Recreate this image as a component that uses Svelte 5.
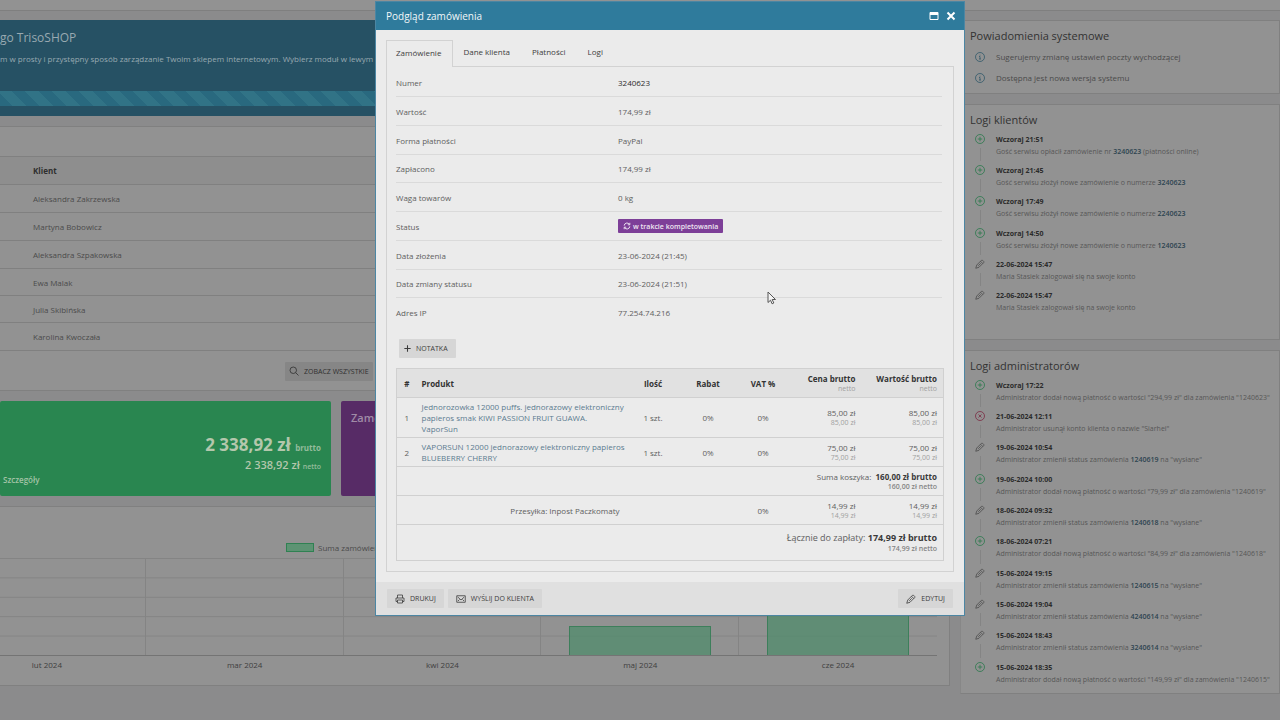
<script lang="ts">
	const customers = [
		'Aleksandra Zakrzewska',
		'Martyna Bobowicz',
		'Aleksandra Szpakowska',
		'Ewa Malak',
		'Julia Skibińska',
		'Karolina Kwoczała'
	];

	const notices = ['Sugerujemy zmianę ustawień poczty wychodzącej', 'Dostępna jest nowa wersja systemu'];

	const customerLogs = [
		{ icon: 'plus', date: 'Wczoraj 21:51', before: 'Gość serwisu opłacił zamówienie nr', order: '3240623', after: '(płatności online)' },
		{ icon: 'plus', date: 'Wczoraj 21:45', before: 'Gość serwisu złożył nowe zamówienie o numerze', order: '3240623', after: '' },
		{ icon: 'plus', date: 'Wczoraj 17:49', before: 'Gość serwisu złożył nowe zamówienie o numerze', order: '2240623', after: '' },
		{ icon: 'plus', date: 'Wczoraj 14:50', before: 'Gość serwisu złożył nowe zamówienie o numerze', order: '1240623', after: '' },
		{ icon: 'pencil', date: '22-06-2024 15:47', before: 'Maria Stasiek zalogował się na swoje konto', order: '', after: '' },
		{ icon: 'pencil', date: '22-06-2024 15:47', before: 'Maria Stasiek zalogował się na swoje konto', order: '', after: '' }
	];

	const adminLogs = [
		{ icon: 'plus', date: 'Wczoraj 17:22', before: 'Administrator dodał nową płatność o wartości "294,99 zł" dla zamówienia "1240623"', order: '', after: '' },
		{ icon: 'remove', date: '21-06-2024 12:11', before: 'Administrator usunął konto klienta o nazwie "Siarhei"', order: '', after: '' },
		{ icon: 'pencil', date: '19-06-2024 10:54', before: 'Administrator zmienił status zamówienia', order: '1240619', after: 'na "wysłane"' },
		{ icon: 'plus', date: '19-06-2024 10:00', before: 'Administrator dodał nową płatność o wartości "79,99 zł" dla zamówienia "1240619"', order: '', after: '' },
		{ icon: 'pencil', date: '18-06-2024 09:32', before: 'Administrator zmienił status zamówienia', order: '1240618', after: 'na "wysłane"' },
		{ icon: 'plus', date: '18-06-2024 07:21', before: 'Administrator dodał nową płatność o wartości "84,99 zł" dla zamówienia "1240618"', order: '', after: '' },
		{ icon: 'pencil', date: '15-06-2024 19:15', before: 'Administrator zmienił status zamówienia', order: '1240615', after: 'na "wysłane"' },
		{ icon: 'pencil', date: '15-06-2024 19:04', before: 'Administrator zmienił status zamówienia', order: '4240614', after: 'na "wysłane"' },
		{ icon: 'pencil', date: '15-06-2024 18:43', before: 'Administrator zmienił status zamówienia', order: '3240614', after: 'na "wysłane"' },
		{ icon: 'plus', date: '15-06-2024 18:35', before: 'Administrator dodał nową płatność o wartości "149,99 zł" dla zamówienia "1240615"', order: '', after: '' }
	];

	// bar height as a percent of the plot
	const months = [
		{ label: 'lut 2024', value: 0 },
		{ label: 'mar 2024', value: 0 },
		{ label: 'kwi 2024', value: 0 },
		{ label: 'maj 2024', value: 29 },
		{ label: 'cze 2024', value: 88 }
	];

	const tabs = ['Zamówienie', 'Dane klienta', 'Płatności', 'Logi'];
	let activeTab = 'Zamówienie';

	const details = [
		{ label: 'Numer', value: '3240623' },
		{ label: 'Wartość', value: '174,99 zł' },
		{ label: 'Forma płatności', value: 'PayPal' },
		{ label: 'Zapłacono', value: '174,99 zł' },
		{ label: 'Waga towarów', value: '0 kg' },
		{ label: 'Status', value: 'w trakcie kompletowania' },
		{ label: 'Data złożenia', value: '23-06-2024 (21:45)' },
		{ label: 'Data zmiany statusu', value: '23-06-2024 (21:51)' },
		{ label: 'Adres IP', value: '77.254.74.216' }
	];

	const products = [
		{ name: 'Jednorozowka 12000 puffs. jednorazowy elektroniczny\npapieros smak KIWI PASSION FRUIT GUAWA.\nVaporSun', price: '85,00 zł' },
		{ name: 'VAPORSUN 12000 jednorazowy elektroniczny papieros\nBLUEBERRY CHERRY', price: '75,00 zł' }
	];
</script>

{#snippet pencil()}
	<svg class="icon" viewBox="0 0 20 20" aria-hidden="true">
		<path d="M1.500 18.500l2-6.500L13 2.500a1.500 1.500 0 0 1 2 0L17.500 5a1.500 1.500 0 0 1 0 2L8 16.500zM11 4.500L15.500 9M6.500 13.500l5-5" />
	</svg>
{/snippet}

{#snippet timeline(logs: any[])}
	<ul class="timeline">
		{#each logs as log}
			<li>
				<span class="mark {log.icon}">
					{#if log.icon === 'pencil'}
						{@render pencil()}
					{:else}
						<svg class="icon" viewBox="0 0 20 20" aria-hidden="true">
							<circle cx="10" cy="10" r="9" />
							<path d={log.icon === 'plus' ? 'M10 5.500v9M5.500 10h9' : 'M7 7l6 6M13 7l-6 6'} />
						</svg>
					{/if}
				</span>
				<div>
					<strong>{log.date}</strong>
					<p>{log.before} {#if log.order}<a href="#order">{log.order}</a>{/if} {log.after}</p>
				</div>
			</li>
		{/each}
	</ul>
{/snippet}

<div class="page">
	<div class="topbar"></div>

	<div class="columns">
		<main>
			<section class="banner">
				<h1>go TrisoSHOP</h1>
				<p>m w prosty i przystępny sposób zarządzanie Twoim sklepem internetowym. Wybierz moduł w lewym p</p>
				<div class="progress"></div>
			</section>

			<section class="panel orders">
				<table>
					<thead>
						<tr><th>Klient</th></tr>
					</thead>
					<tbody>
						{#each customers as customer}
							<tr><td>{customer}</td></tr>
						{/each}
					</tbody>
				</table>
				<div class="orders-footer">
					<button class="btn dim">
						<svg class="icon" viewBox="0 0 20 20" aria-hidden="true"><circle cx="8.500" cy="8.500" r="6.500" /><path d="M13.500 13.500L19 19" /></svg>
						Zobacz wszystkie
					</button>
				</div>
			</section>

			<div class="cards">
				<section class="card green">
					<div class="sum">2 338,92 zł <small>brutto</small></div>
					<div class="sum-net">2 338,92 zł <small>netto</small></div>
					<a href="#details">Szczegóły</a>
				</section>
				<section class="card purple">
					<h2>Zamó</h2>
				</section>
			</div>

			<section class="panel chart">
				<div class="legend"><span class="swatch"></span>Suma zamówień</div>
				<div class="plot">
					{#each months as month}
						<div class="month">
							{#if month.value}
								<div class="bar" style="height: {month.value}%"></div>
							{/if}
						</div>
					{/each}
				</div>
				<div class="axis">
					{#each months as month}
						<span>{month.label}</span>
					{/each}
				</div>
			</section>
		</main>

		<aside>
			<section class="panel notices">
				<h2>Powiadomienia systemowe</h2>
				<ul>
					{#each notices as notice}
						<li>
							<svg class="icon" viewBox="0 0 20 20" aria-hidden="true"><circle cx="10" cy="10" r="9" /><path d="M8 9h2v5M8 14h4M10 5.500v1.500" /></svg>
							{notice}
						</li>
					{/each}
				</ul>
			</section>
			<section class="panel customer-logs">
				<h2>Logi klientów</h2>
				{@render timeline(customerLogs)}
			</section>
			<section class="panel">
				<h2>Logi administratorów</h2>
				{@render timeline(adminLogs)}
			</section>
		</aside>
	</div>
</div>

<div class="overlay">
	<div class="modal" role="dialog" aria-labelledby="modal-title">
		<header>
			<h2 id="modal-title">Podgląd zamówienia</h2>
			<button aria-label="Maksymalizuj">
				<svg viewBox="0 0 10 10" aria-hidden="true"><path d="M1 1.500h8v7H1z" fill="none" stroke="#fff" /><path d="M1 1.500h8v2.500H1z" fill="#fff" /></svg>
			</button>
			<button aria-label="Zamknij">
				<svg viewBox="0 0 10 10" aria-hidden="true"><path d="M1.500 1.500l7 7M8.500 1.500l-7 7" stroke="#fff" stroke-width="2" /></svg>
			</button>
		</header>

		<div class="modal-body">
			<div class="tabs" role="tablist">
				{#each tabs as tab}
					<button role="tab" aria-selected={activeTab === tab} class:active={activeTab === tab} on:click={() => (activeTab = tab)}>{tab}</button>
				{/each}
			</div>

			<div class="tab-panel">
				<dl>
					{#each details as row}
						<div>
							<dt>{row.label}</dt>
							<dd class:strong={row.label === 'Numer'}>
								{#if row.label === 'Status'}
									<span class="badge">
										<svg class="icon" viewBox="0 0 20 20" aria-hidden="true"><path d="M3 9a7 7 0 0 1 13-3M17 2v5h-5M17 11a7 7 0 0 1-13 3M3 18v-5h5" /></svg>
										{row.value}
									</span>
								{:else}
									{row.value}
								{/if}
							</dd>
						</div>
					{/each}
				</dl>

				<button class="btn note">
					<svg class="icon" viewBox="0 0 20 20" aria-hidden="true"><path d="M10 1v18M1 10h18" /></svg>
					Notatka
				</button>

				<table class="products">
					<colgroup>
						<col class="c-no" /><col class="c-name" /><col class="c-mid" /><col class="c-mid" /><col class="c-mid" /><col class="c-price" /><col class="c-value" />
					</colgroup>
					<thead>
						<tr>
							<th>#</th>
							<th class="left">Produkt</th>
							<th>Ilość</th>
							<th>Rabat</th>
							<th>VAT %</th>
							<th class="right">Cena brutto<small>netto</small></th>
							<th class="right">Wartość brutto<small>netto</small></th>
						</tr>
					</thead>
					<tbody>
						{#each products as product, i}
							<tr>
								<td>{i + 1}</td>
								<td class="left"><a href="#product">{product.name}</a></td>
								<td>1 szt.</td>
								<td>0%</td>
								<td>0%</td>
								<td class="right">{product.price}<small>{product.price}</small></td>
								<td class="right">{product.price}<small>{product.price}</small></td>
							</tr>
						{/each}
						<tr>
							<td class="right" colspan="7">Suma koszyka: &nbsp;<b>160,00 zł brutto</b><small><b>160,00 zł netto</b></small></td>
						</tr>
						<tr>
							<td class="right" colspan="2">Przesyłka: Inpost Paczkomaty</td>
							<td></td>
							<td></td>
							<td>0%</td>
							<td class="right">14,99 zł<small>14,99 zł</small></td>
							<td class="right">14,99 zł<small>14,99 zł</small></td>
						</tr>
						<tr class="total">
							<td class="right" colspan="7">Łącznie do zapłaty: <b>174,99 zł brutto</b><small><b>174,99 zł netto</b></small></td>
						</tr>
					</tbody>
				</table>
			</div>
		</div>

		<footer>
			<button class="btn">
				<svg class="icon" viewBox="0 0 20 20" aria-hidden="true"><path d="M5 8V2h10v6M5 15H2V8h16v7h-3M5 12h10v6H5z" /></svg>
				Drukuj
			</button>
			<button class="btn">
				<svg class="icon" viewBox="0 0 20 20" aria-hidden="true"><path d="M1.500 3.500h17v13h-17zM3.500 6l6.500 6 6.500-6M4 14l3-3M16 14l-3-3" /></svg>
				Wyślij do klienta
			</button>
			<button class="btn edit">
				{@render pencil()}
				Edytuj
			</button>
		</footer>
	</div>

	<svg class="cursor" viewBox="0 0 10 14" aria-hidden="true"><path d="M1 1v10.500l2.500-2.300 1.600 3.600 1.700-.8-1.600-3.500H8.500z" /></svg>
</div>

<style>
	:global(body) {
		background: #8b8b8c;
		font-family: 'Open Sans', 'Noto Sans', sans-serif;
		font-size: 8px;
		line-height: 11px;
		overflow: hidden;
	}

	h1, h2, p, ul, dl, dd {
		margin: 0;
		padding: 0;
		font-weight: 400;
	}

	ul {
		list-style: none;
	}

	a {
		text-decoration: none;
	}

	button {
		font-family: inherit;
		border: none;
		padding: 0;
		cursor: pointer;
	}

	.icon {
		flex: none;
		width: 10px;
		height: 10px;
		fill: none;
		stroke: currentColor;
		stroke-width: 1.6;
	}

	.page {
		color: #4b4b4b;
	}

	.topbar {
		height: 10px;
		background: #929292;
		border-bottom: 1px solid #7f7f7f;
		margin-bottom: 9px;
	}

	.columns {
		display: grid;
		grid-template-columns: minmax(0, 1fr) 320px;
		gap: 10px;
		align-items: start;
	}

	main, aside {
		display: flex;
		flex-direction: column;
		gap: 10px;
		min-width: 0;
	}

	.panel {
		box-sizing: border-box;
		background: #929292;
		border: 1px solid #808080;
		border-left-color: #878787;
	}

	main .panel {
		border-left: none;
	}

	.banner {
		box-sizing: border-box;
		height: 96px;
		padding: 9px 0 10px;
		background: #265164;
		color: #98a9b1;
		overflow: hidden;
	}

	.banner h1 {
		font-size: 12px;
		line-height: 18px;
	}

	.banner p {
		padding-top: 6px;
		line-height: 11px;
		white-space: nowrap;
	}

	.progress {
		height: 15px;
		margin-top: 27px;
		background: repeating-linear-gradient(45deg, #29697f 0 9px, #317386 9px 19px);
	}

	.orders {
		padding-top: 29px;
	}

	.orders table {
		width: 100%;
		border-collapse: collapse;
	}

	.orders th, .orders td {
		box-sizing: border-box;
		height: 28px;
		padding: 0 33px;
		text-align: left;
		border-top: 1px solid #808080;
	}

	.orders th {
		color: #2f2f2f;
		background: #8e8e8e;
	}

	.orders tbody tr:nth-last-child(-n + 3) td {
		height: 27px;
	}

	.orders-footer {
		padding: 11px 0 9px 285px;
		border-top: 1px solid #808080;
	}

	.btn {
		display: inline-flex;
		align-items: center;
		gap: 5px;
		height: 19px;
		padding: 0 8px;
		background: #d6d6d6;
		color: #3c3c3c;
		font-size: 7px;
		line-height: 11px;
		text-transform: uppercase;
		border-radius: 1px;
	}

	.btn.dim {
		background: #868686;
		color: #303030;
		padding: 0 4px;
	}

	.cards {
		display: grid;
		grid-template-columns: 331px 1fr;
		gap: 10px;
	}

	.card {
		box-sizing: border-box;
		height: 95px;
		border-radius: 2px;
		padding: 9px 10px;
		font-weight: 600;
		color: #b4c7ac;
	}

	.green {
		display: flex;
		flex-direction: column;
		align-items: flex-end;
		padding-top: 33px;
		background: #298650;
	}

	.green a {
		align-self: flex-start;
		margin: 0 -7px;
		font-weight: 600;
		color: #a3c3a6;
	}

	.purple {
		background: #572b66;
		color: #a08ba7;
	}

	.purple h2 {
		font-size: 11px;
		line-height: 15px;
		font-weight: 600;
	}

	.sum {
		font-size: 17px;
		line-height: 21px;
		font-weight: 700;
	}

	.sum-net {
		font-size: 11px;
		line-height: 14px;
	}

	.sum small, .sum-net small {
		font-size: 7px;
		color: #94bc9c;
	}

	.sum small {
		font-size: 8px;
	}

	.chart {
		padding: 35px 12px 15px 0;
		overflow: hidden;
	}

	.legend {
		display: flex;
		align-items: center;
		gap: 4px;
		padding-left: 286px;
	}

	.swatch {
		box-sizing: border-box;
		width: 28px;
		height: 9px;
		background: #5d9373;
		border: 1px solid #2f8152;
	}

	.plot, .axis {
		display: grid;
		grid-template-columns: repeat(5, 1fr);
		margin-left: -52px;
	}

	.plot {
		height: 97px;
		margin-top: 5px;
		border-bottom: 1px solid #747474;
		background: linear-gradient(#848484 1px, transparent 1px) 0 0 / 100% 20%;
	}

	.month {
		display: flex;
		align-items: flex-end;
		justify-content: center;
		border-right: 1px solid #848484;
	}

	.month:last-child {
		border: none;
	}

	.bar {
		box-sizing: border-box;
		width: 72%;
		background: rgba(75, 140, 105, 0.7);
		border: 1px solid #3d7f5b;
		border-bottom: none;
	}

	.axis {
		padding-top: 3px;
		text-align: center;
		line-height: 11px;
		color: #404040;
	}

	aside .panel {
		padding: 6px 0 7px 9px;
		white-space: nowrap;
		overflow: hidden;
	}

	aside h2 {
		font-size: 11px;
		line-height: 17px;
		color: #333;
	}

	.notices ul {
		padding: 2px 5px 0;
	}

	.notices li {
		display: flex;
		align-items: center;
		gap: 11px;
		height: 21px;
	}

	.notices .icon {
		color: #31596b;
	}

	aside .panel.notices {
		padding-bottom: 5px;
	}

	aside .customer-logs {
		padding-bottom: 25px;
	}

	.timeline {
		padding: 6px 5px 0;
	}

	.timeline li {
		display: flex;
		gap: 11px;
		height: 31px;
		font-size: 7px;
		line-height: 12px;
		color: #575757;
	}

	.timeline li:nth-child(3n) {
		height: 32px;
	}

	.timeline li:last-child {
		height: 24px;
	}

	.mark {
		display: flex;
		flex-direction: column;
		align-items: center;
		color: #4b4b4b;
	}

	.mark.plus {
		color: #2b7a4c;
	}

	.mark.remove {
		color: #7c2b43;
	}

	.timeline li:not(:last-child) .mark::after {
		content: '';
		flex: 1;
		width: 1px;
		margin: 4px 0;
		background: #848484;
	}

	.timeline strong {
		display: block;
		color: #2b2b2b;
	}

	.timeline a {
		color: #2d4450;
		font-weight: 600;
	}

	.overlay {
		position: absolute;
		inset: 0;
		display: flex;
		justify-content: center;
		align-items: flex-start;
		padding: 1px 0 0 60px;
	}

	.modal {
		box-sizing: border-box;
		width: 590px;
		background: #ebebeb;
		border: 1px solid #4c86a3;
		color: #606060;
	}

	.modal header {
		display: flex;
		align-items: center;
		gap: 7px;
		height: 28px;
		padding: 0 8px 0 10px;
		background: #2f7b9c;
	}

	.modal header h2 {
		flex: 1;
		font-size: 10px;
		line-height: 16px;
		color: #f2f7f9;
	}

	.modal header button {
		display: flex;
		background: none;
	}

	.modal header svg {
		width: 10px;
		height: 10px;
	}

	.modal-body {
		padding: 10px;
	}

	.tabs {
		display: flex;
	}

	.tabs button {
		box-sizing: border-box;
		height: 26px;
		padding: 0 11px 4px 9px;
		font-size: 8px;
		color: #404040;
		background: none;
		border: 1px solid transparent;
		border-bottom: none;
	}

	.tabs .active {
		position: relative;
		z-index: 1;
		height: 27px;
		margin-bottom: -1px;
		border-color: #d2d2d2;
		background: #ebebeb;
	}

	.tab-panel {
		padding: 1px 11px 10px 9px;
		border: 1px solid #d2d2d2;
	}

	dl div {
		box-sizing: border-box;
		display: flex;
		align-items: center;
		height: 29px;
		border-bottom: 1px solid #dadada;
	}

	dl div:nth-child(4n) {
		height: 28px;
	}

	dl div:last-child {
		border: none;
	}

	dt {
		flex: 0 0 222px;
	}

	dd.strong {
		color: #2c2c2c;
	}

	.badge {
		display: flex;
		align-items: center;
		gap: 2px;
		height: 14px;
		padding: 0 5px;
		background: #7d3f98;
		color: #efe6f2;
		font-size: 7px;
		font-weight: 600;
		border-radius: 1px;
	}

	.badge .icon {
		width: 8px;
		height: 8px;
		stroke-width: 2.4;
	}

	.note {
		margin: 12px 3px 10px;
		padding: 0 8px 0 5px;
	}

	.note .icon {
		width: 7px;
		height: 7px;
		stroke-width: 3;
	}

	.products {
		width: 100%;
		table-layout: fixed;
		border-collapse: collapse;
		border: 1px solid #d0d0d0;
	}

	.c-no { width: 20px; }
	.c-name { width: 209px; }
	.c-mid { width: 55px; }
	.c-price { width: 71px; }
	.c-value { width: 82px; }

	.products th, .products td {
		height: 28px;
		padding: 0 6px;
		text-align: center;
		border-bottom: 1px solid #d0d0d0;
	}

	.products th:first-child {
		padding: 0 5px;
	}

	.products th {
		background: #e1e1e1;
		color: #333;
	}

	.products tbody tr:first-child td {
		height: 39px;
	}

	.products .total td {
		height: 35px;
		font-size: 9px;
		line-height: 12px;
	}

	.products .left {
		padding: 0 0 0 5px;
		text-align: left;
	}

	.products .right {
		text-align: right;
	}

	.products a {
		display: block;
		white-space: pre;
		color: #5b7b90;
	}

	.products small {
		display: block;
		font-size: 7px;
		line-height: 10px;
		font-weight: 400;
		color: #a0a0a0;
	}

	.products td b {
		color: #3a3a3a;
	}

	.products small b {
		font-weight: 600;
		color: #858585;
	}

	.modal footer {
		display: flex;
		align-items: center;
		gap: 4px;
		height: 33px;
		padding: 0 11px;
		background: #e0e0e0;
	}

	.edit {
		margin-left: auto;
	}

	.cursor {
		position: absolute;
		left: 767px;
		top: 291px;
		width: 10px;
		height: 14px;
		fill: #f4f4f4;
		stroke: #555;
	}
</style>
